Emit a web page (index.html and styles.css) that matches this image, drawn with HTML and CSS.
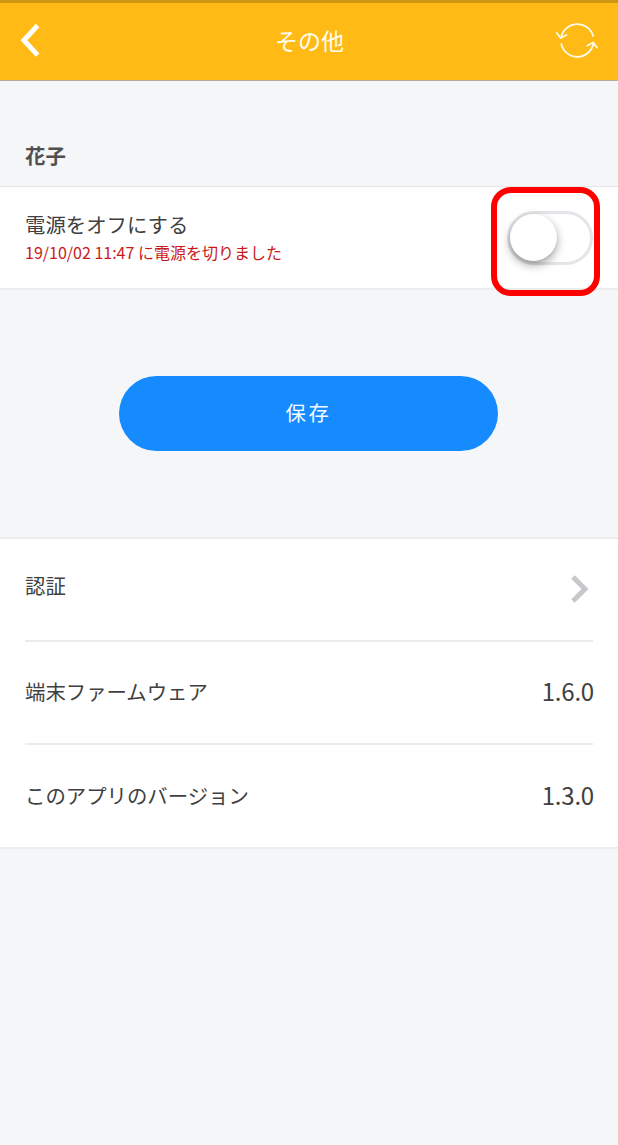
FILE: index.html
```html
<!DOCTYPE html>
<html lang="ja">
<head>
<meta charset="utf-8">
<meta name="viewport" content="width=device-width, initial-scale=1">
<title>その他</title>
<link rel="stylesheet" href="styles.css">
</head>
<body>
<header class="header">
  <svg class="back" viewBox="0 0 20 34" width="20" height="34"><path d="M17.6 1.5 3.9 16.3 17.6 31.1" fill="none" stroke="#fff" stroke-width="5"/></svg>
  <h1 class="title">その他</h1>
  <svg class="refresh" viewBox="0 0 44 40" width="44" height="40" fill="none" stroke="#fffbe6" stroke-width="1.8" stroke-linecap="round" stroke-linejoin="round">
    <path d="M6.1 17A16.4 16.4 0 0 1 38.1 15"/>
    <path d="M1.7 12 5.7 17 11.5 14"/>
    <path d="M6.3 23A16.4 16.4 0 0 0 38.5 22"/>
    <path d="M32.3 24.7 38 21.5 42 26.5"/>
  </svg>
</header>
<main>
  <h2 class="section-name">花子</h2>
  <section class="power">
    <div>
      <p class="label">電源をオフにする</p>
      <p class="status">19/10/02 11:47 に電源を切りました</p>
    </div>
    <div class="toggle"><span class="knob"></span><span class="highlight"></span></div>
  </section>
  <div class="actions"><button class="save" type="button">保存</button></div>
  <section class="list">
    <div class="row row-auth"><span class="label">認証</span>
      <svg class="chevron" viewBox="0 0 20 28" width="20" height="28"><path d="M3 2 15 14 3 26" fill="none" stroke="#c7c7cc" stroke-width="5"/></svg>
    </div>
    <div class="row"><span class="label">端末ファームウェア</span><span class="version">1.6.0</span></div>
    <div class="row"><span class="label">このアプリのバージョン</span><span class="version">1.3.0</span></div>
  </section>
</main>
</body>
</html>
```
FILE: styles.css
```css
* { box-sizing: border-box; }
body, h1, h2, p { margin: 0; }
body {
  min-height: 1145px;
  background: #f4f6f8;
  color: #404040;
  font-family: "Noto Sans CJK JP", sans-serif;
}
.header {
  display: grid;
  grid-template-columns: 44px 1fr 44px;
  align-items: center;
  height: 81px;
  padding: 0 19px 1px 20px;
  background: #ffba16;
  border-top: 3px solid #cf9614;
  border-bottom: 1px solid #b3aa98;
}
.title {
  padding-bottom: 2px;
  color: #fffdf0;
  font-size: 23px;
  font-weight: 400;
  line-height: 34px;
  text-align: center;
}
.section-name {
  height: 105px;
  padding: 60px 25px 0;
  font-size: 20.4px;
  font-weight: 700;
  line-height: 29px;
  color: #505050;
}
.power {
  display: flex;
  justify-content: space-between;
  height: 104px;
  padding: 24px 25px 0 25px;
  background: #fff;
  border-top: 1px solid #e6e7e8;
  border-bottom: 2px solid #ebecec;
}
.power .label { line-height: 27px; }
.label {
  font-size: 20.4px;
  line-height: 28px;
}
.status {
  color: #c91a1a;
  font-size: 16px;
  line-height: 28px;
}
.toggle {
  position: relative;
  width: 86px;
  height: 54px;
  border: 3px solid #e4e4e9;
  border-radius: 27px;
}
.knob {
  position: absolute;
  left: 0;
  top: 0;
  width: 47px;
  height: 47px;
  border-radius: 50%;
  background: #fff;
  box-shadow: 0 4px 10px rgba(0, 0, 0, .36), 0 1px 2px rgba(0, 0, 0, .1);
}
.highlight {
  position: absolute;
  left: -19px;
  top: -27px;
  width: 109px;
  height: 109px;
  border: 6px solid #f00;
  border-radius: 20px;
}
.actions {
  display: flex;
  justify-content: center;
  height: 247px;
  padding: 86px 1px 0 0;
}
.save {
  width: 379px;
  height: 75px;
  padding: 0 0 3px;
  border: 0;
  border-radius: 38px;
  background: #158bff;
  color: #f4faff;
  font: 400 20.4px/30px "Noto Sans CJK JP", sans-serif;
  letter-spacing: 2.6px;
}
.list {
  height: 312px;
  padding: 0 25px;
  background: #fff;
  border-top: 2px solid #ebecec;
  border-bottom: 2px solid #ebecec;
}
.row {
  display: flex;
  align-items: center;
  justify-content: space-between;
  height: 103px;
  padding-bottom: 3px;
  border-bottom: 2px solid #ebebeb;
}
.row-auth { padding: 0 3px 9px 0; }
.row:last-child { border-bottom: 0; }
.chevron { margin-top: 7px; }
.version {
  padding-bottom: 1px;
  margin-right: -1px;
  font-size: 24px;
  line-height: 34px;
  letter-spacing: -.2px;
}
```
